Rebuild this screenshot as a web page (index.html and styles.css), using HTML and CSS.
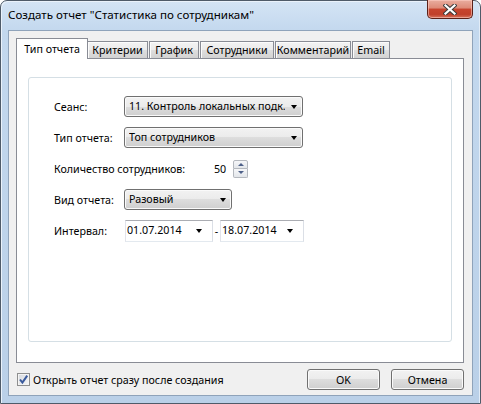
FILE: index.html
```html
<!DOCTYPE html>
<html lang="ru">
<head>
<meta charset="utf-8">
<title>Создать отчет</title>
<link rel="stylesheet" href="styles.css">
</head>
<body>
<div class="window">
  <div class="titlebar">
    <span class="title">Создать отчет "Статистика по сотрудникам"</span>
    <div class="close">
      <svg width="14" height="11" viewBox="0 0 14 11">
        <path d="M2.5 1.5 L11.5 9.5 M11.5 1.5 L2.5 9.5" stroke="#3b3b3b" stroke-width="4.2" stroke-linecap="square" fill="none"/>
        <path d="M2.5 1.5 L11.5 9.5 M11.5 1.5 L2.5 9.5" stroke="#ffffff" stroke-width="2.2" stroke-linecap="square" fill="none"/>
      </svg>
    </div>
  </div>
  <div class="client">
    <div class="tabs">
      <div class="tab active">Тип отчета</div>
      <div class="tab tab-criteria">Критерии</div>
      <div class="tab tab-chart">График</div>
      <div class="tab tab-staff">Сотрудники</div>
      <div class="tab tab-comment">Комментарий</div>
      <div class="tab tab-email">Email</div>
    </div>
    <div class="tabpanel">
      <div class="group">
        <div class="row">
          <span class="label">Сеанс:</span>
          <div class="combo combo-wide"><span class="value">11. Контроль локальных подк.</span><i class="arrow"></i></div>
        </div>
        <div class="row">
          <span class="label">Тип отчета:</span>
          <div class="combo combo-wide"><span class="value">Топ сотрудников</span><i class="arrow"></i></div>
        </div>
        <div class="row">
          <span class="label label-long">Количество сотрудников:</span>
          <span class="number">50</span>
          <div class="spinner">
            <div class="spin up"><i></i></div>
            <div class="spin down"><i></i></div>
          </div>
        </div>
        <div class="row">
          <span class="label">Вид отчета:</span>
          <div class="combo combo-short"><span class="value">Разовый</span><i class="arrow"></i></div>
        </div>
        <div class="row">
          <span class="label">Интервал:</span>
          <div class="date date-first"><span class="value">01.07.2014</span><i class="arrow"></i></div>
          <span class="dash">-</span>
          <div class="date date-second"><span class="value">18.07.2014</span><i class="arrow"></i></div>
        </div>
      </div>
    </div>
    <div class="footer">
      <label class="check">
        <span class="box">
          <svg width="11" height="11" viewBox="0 0 11 11"><path d="M2 5.5 L4.4 8.6 L9.2 1.6" stroke="#3a5a9c" stroke-width="2" fill="none" stroke-linejoin="miter"/></svg>
        </span>
        <span>Открыть отчет сразу после создания</span>
      </label>
      <div class="buttons">
        <button class="btn">OK</button>
        <button class="btn">Отмена</button>
      </div>
    </div>
  </div>
</div>
</body>
</html>
```

FILE: styles.css
```css
html, body {
  margin: 0;
  padding: 0;
  background: #ffffff;
}

body {
  font-family: "Noto Sans", "Open Sans", sans-serif;
  font-size: 10.7px;
  color: #000;
}

.window {
  width: 481px;
  height: 404px;
  box-sizing: border-box;
  border: 1px solid #4f5b69;
  border-radius: 7px 7px 0 0;
  background: linear-gradient(#d4e4f5, #c3d8ee 30px, #bad0e8);
  box-shadow: inset 1px 1px 0 #eaf2fb, inset -1px 0 0 #e2ecf7;
  padding: 0 7px 7px 7px;
  display: flex;
  flex-direction: column;
}

.titlebar {
  height: 29px;
  display: flex;
  align-items: flex-start;
}

.title {
  padding-top: 6px;
  line-height: 16px;
  font-size: 11.6px;
  white-space: nowrap;
}

.close {
  margin-left: auto;
  margin-top: -1px;
  width: 46px;
  height: 19px;
  box-sizing: border-box;
  border: 1px solid #5b2119;
  border-top: none;
  border-radius: 0 0 5px 5px;
  background: linear-gradient(#e9ad9f 0%, #dd8a77 45%, #c8452f 50%, #c0402b 80%, #d5735d 100%);
  box-shadow: inset 0 0 0 1px rgba(255, 210, 200, 0.55);
  display: flex;
  align-items: center;
  justify-content: center;
}

.close svg {
  display: block;
}

.client {
  flex: 1;
  background: #f0f0f0;
  border: 1px solid #8fa3ba;
  padding: 7px 8px 0 7px;
  display: flex;
  flex-direction: column;
}

.tabs {
  display: flex;
  align-items: flex-end;
  height: 20px;
  position: relative;
  z-index: 1;
}

.tab {
  box-sizing: border-box;
  height: 17px;
  border: 1px solid #898c95;
  border-bottom: none;
  background: linear-gradient(#f3f3f3 0%, #ebebeb 50%, #dedede 50%, #d2d2d2 100%);
  box-shadow: inset 1px 1px 0 #fcfcfc;
  line-height: 16px;
  padding: 0;
  text-align: center;
  margin-right: 1px;
  white-space: nowrap;
}

.tab.active {
  width: 72px;
  height: 21px;
  margin-bottom: -1px;
  background: #ffffff;
  box-shadow: none;
  padding-top: 1px;
  line-height: 18px;
  margin-right: 0;
}

.tab-criteria {
  width: 60px;
  border-left: none;
}

.tab-chart {
  width: 50px;
}

.tab-staff {
  width: 74px;
}

.tab-comment {
  width: 76px;
}

.tab-email {
  width: 38px;
}

.tabpanel {
  height: 305px;
  box-sizing: border-box;
  background: #ffffff;
  border: 1px solid #898c95;
  padding: 18px 11px 20px 11px;
  display: flex;
  flex-direction: column;
}

.group {
  flex: 1;
  border: 1px solid #d5dfe5;
  border-radius: 3px;
  padding: 18px 0 0 25px;
  display: flex;
  flex-direction: column;
  gap: 10px;
}

.row {
  display: flex;
  align-items: center;
  height: 21px;
}

.label {
  width: 70px;
  flex: none;
  white-space: nowrap;
}

.label-long {
  width: 160px;
}

.combo {
  box-sizing: border-box;
  height: 21px;
  border: 1px solid #707070;
  border-radius: 3px;
  background: linear-gradient(#f2f2f2 0%, #ebebeb 50%, #dddddd 50%, #cfcfcf 100%);
  box-shadow: inset 0 0 0 1px #fafafa;
  display: flex;
  align-items: center;
  padding-left: 4px;
  overflow: hidden;
}

.combo-wide {
  width: 179px;
}

.combo-short {
  width: 108px;
}

.value {
  flex: 1;
  min-width: 0;
  overflow: hidden;
  white-space: nowrap;
  line-height: 19px;
}

.arrow {
  flex: none;
  width: 0;
  height: 0;
  border-left: 3.5px solid transparent;
  border-right: 3.5px solid transparent;
  border-top: 4px solid #000;
  margin: 0 5px 0 6px;
}

.number {
  width: 10px;
  text-align: right;
}

.spinner {
  margin-left: 9px;
  width: 15px;
  height: 18px;
  display: flex;
  flex-direction: column;
}

.spin {
  flex: 1;
  box-sizing: border-box;
  border: 1px solid #b4b8be;
  background: linear-gradient(#f6f7f9, #e3e6ea);
  display: flex;
  align-items: center;
  justify-content: center;
}

.spin.up {
  border-radius: 2px 2px 0 0;
}

.spin.down {
  border-top: none;
  border-radius: 0 0 2px 2px;
}

.spin i {
  width: 0;
  height: 0;
  border-left: 3px solid transparent;
  border-right: 3px solid transparent;
}

.spin.up i {
  border-bottom: 3px solid #4e6189;
}

.spin.down i {
  border-top: 3px solid #4e6189;
}

.date {
  box-sizing: border-box;
  height: 22px;
  border: 1px solid;
  border-color: #abadb3 #dbdfe6 #e3e9ef #e2e3ea;
  background: #ffffff;
  display: flex;
  align-items: center;
  padding-left: 1px;
}

.date .arrow {
  margin: 0 10px 0 4px;
}

.date-first {
  width: 88px;
  margin-left: 1px;
}

.date-second {
  width: 84px;
}

.dash {
  width: 7px;
  text-align: center;
}

.footer {
  display: flex;
  align-items: center;
  height: 21px;
  margin-top: 6px;
}

.check {
  display: flex;
  align-items: center;
  gap: 3px;
  margin-left: 1px;
  white-space: nowrap;
}

.box {
  width: 13px;
  height: 13px;
  box-sizing: border-box;
  border: 1px solid #8e8f8f;
  background: linear-gradient(135deg, #d5d9de, #f7f7f7);
  box-shadow: inset 0 0 0 1px #f4f4f4;
  display: flex;
  align-items: center;
  justify-content: center;
}

.box svg {
  display: block;
}

.buttons {
  margin-left: auto;
  display: flex;
  gap: 11px;
}

.btn {
  width: 73px;
  height: 21px;
  box-sizing: border-box;
  border: 1px solid #707070;
  border-radius: 3px;
  background: linear-gradient(#f2f2f2 0%, #ebebeb 50%, #dddddd 50%, #cfcfcf 100%);
  box-shadow: inset 0 0 0 1px #fafafa;
  font: inherit;
  color: #000;
  padding: 0;
  margin: 0;
}
```
